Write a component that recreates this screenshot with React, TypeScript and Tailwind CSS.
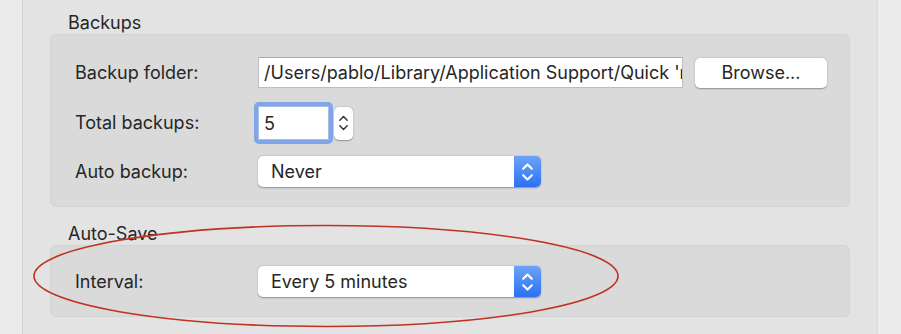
import React from 'react';

function Chevrons({ color, width, height, stroke }: { color: string; width: number; height: number; stroke: number }) {
  return (
    <svg width={width} height={height} viewBox="0 0 12 20" fill="none">
      <path d="M2 7 L6 3 L10 7" stroke={color} strokeWidth={stroke} strokeLinecap="round" strokeLinejoin="round" />
      <path d="M2 13 L6 17 L10 13" stroke={color} strokeWidth={stroke} strokeLinecap="round" strokeLinejoin="round" />
    </svg>
  );
}

function Popup({ value }: { value: string }) {
  return (
    <div className="flex h-[31px] w-[283px] rounded-[5px] bg-white shadow-[0_0.5px_1.5px_rgba(0,0,0,0.35)]">
      <div className="flex flex-1 items-center pl-[13px] text-[18px] text-[#262626]">{value}</div>
      <div className="flex w-[27px] items-center justify-center rounded-r-[5px] bg-gradient-to-b from-[#6aa3f9] to-[#2d6ff2]">
        <Chevrons color="#ffffff" width={13} height={22} stroke={2} />
      </div>
    </div>
  );
}

export default function App() {
  return (
    <div
      className="relative flex h-[334px] w-[901px] overflow-hidden bg-[#e3e3e3] text-[#262626]"
      style={{ fontFamily: 'Inter, "Liberation Sans", sans-serif' }}
    >
      <div className="w-[23px] shrink-0 border-r border-[#d3d3d3] bg-[#ebebeb]" />

      <div className="flex-1 px-[27px] pt-[13px]">
        {/* Backups */}
        <div className="mb-[1px] h-[20px] pl-[18px] text-[18px] leading-[20px]">Backups</div>
        <div className="rounded-[6px] border border-[#d3d3d3] bg-[#dadada] pb-[19px] pl-[24px] pt-[22px]">
          <div className="flex h-[31px] items-center">
            <div className="w-[183px] text-[18px] leading-[20px]">Backup folder:</div>
            <div className="flex h-[31px] w-[425px] items-center overflow-hidden whitespace-nowrap border border-[#bdbdbd] border-t-[#a8a8a8] bg-white pl-[5px] text-[18px]">
              /Users/pablo/Library/Application Support/Quick 'r
            </div>
            <div className="ml-[12px] flex h-[30px] w-[132px] items-center justify-center rounded-[5px] bg-white text-[18px] shadow-[0_0.5px_1.5px_rgba(0,0,0,0.35)]">
              Browse...
            </div>
          </div>

          <div className="mt-[14px] flex h-[42px] items-center">
            <div className="w-[183px] text-[18px] leading-[20px]">Total backups:</div>
            <div className="-ml-[4px] rounded-[5px] bg-[#80a5e9] p-[4px]">
              <div className="flex h-[34px] w-[71px] items-center border border-[#a9bde0] bg-white pl-[5px] text-[18px]">5</div>
            </div>
            <div className="ml-[1px] flex h-[33px] w-[19px] items-center justify-center rounded-[5px] bg-white shadow-[0_0.5px_1.5px_rgba(0,0,0,0.35)]">
              <Chevrons color="#333333" width={11} height={22} stroke={1.6} />
            </div>
          </div>

          <div className="mt-[12px] flex h-[31px] items-center">
            <div className="w-[183px] text-[18px] leading-[20px]">Auto backup:</div>
            <Popup value="Never" />
          </div>
        </div>

        {/* Auto-Save */}
        <div className="mb-[1px] mt-[17px] h-[20px] pl-[18px] text-[18px] leading-[20px]">Auto-Save</div>
        <div className="rounded-[6px] border border-[#d3d3d3] bg-[#dadada] pb-[19px] pl-[24px] pt-[20px]">
          <div className="flex h-[31px] items-center">
            <div className="w-[183px] text-[18px] leading-[20px]">Interval:</div>
            <Popup value="Every 5 minutes" />
          </div>
        </div>
      </div>

      <div className="w-[24px] shrink-0 border-l border-[#dadada] bg-[#ececec]" />

      {/* annotation */}
      <svg className="pointer-events-none absolute left-0 top-0" width="901" height="334">
        <ellipse cx="326" cy="276" rx="292" ry="50.5" fill="none" stroke="#bf3322" strokeWidth="1.6" />
      </svg>
    </div>
  );
}
